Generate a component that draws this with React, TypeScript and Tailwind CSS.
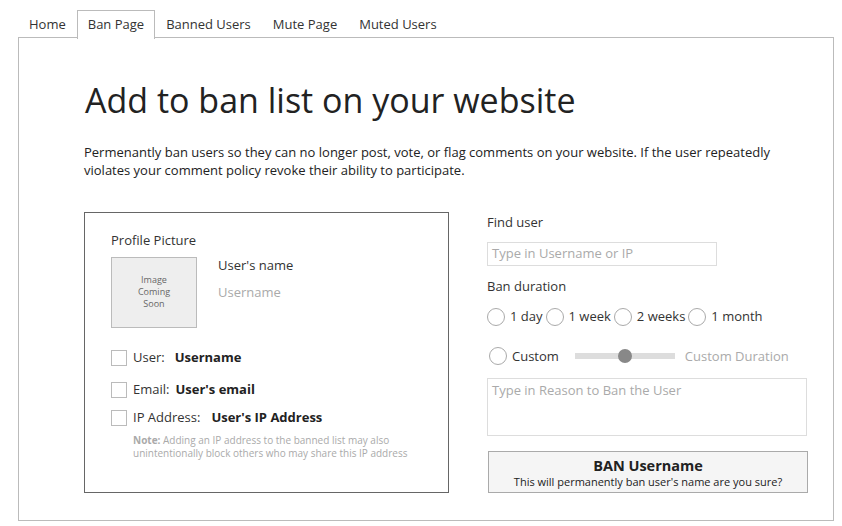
import React from 'react';

const tabs = ['Home', 'Ban Page', 'Banned Users', 'Mute Page', 'Muted Users'];

function Radio({ label, className = '' }: { label: string; className?: string }) {
  return (
    <label className={`flex items-center gap-[5px] ${className}`}>
      <span className="w-[18px] h-[18px] rounded-full border border-[#aaa] bg-white shrink-0" />
      <span>{label}</span>
    </label>
  );
}

function Check({ label, value, gap }: { label: string; value: string; gap: string }) {
  return (
    <div className="flex items-center h-[18px]">
      <span className="w-[16px] h-[16px] border border-[#bbb] bg-white shrink-0" />
      <span className="ml-[6px] text-[#333]">{label}</span>
      <span className={`${gap} font-bold text-[#222]`}>{value}</span>
    </div>
  );
}

export default function App() {
  return (
    <div
      className="w-[842px] h-[526px] bg-white text-[13px] text-[#333] pt-[10px] pl-[18px]"
      style={{ fontFamily: '"Open Sans", "Liberation Sans", sans-serif' }}
    >
      {/* Tabs */}
      <div className="flex h-[28px] w-[816px] border-b border-[#bbb]">
        {tabs.map((t) => (
          <div
            key={t}
            className={`px-[10px] flex items-center h-[29px] ${
              t === 'Ban Page'
                ? 'border border-b-0 border-[#bbb] bg-white -mb-px'
                : 'border border-transparent'
            }`}
          >
            {t}
          </div>
        ))}
      </div>

      {/* Panel */}
      <div className="w-[816px] h-[483px] border border-t-0 border-[#bbb] pl-[65px] pt-[39px]">
        <h1 className="ml-[1px] text-[34px] leading-[46px] text-[#222] font-normal">
          Add to ban list on your website
        </h1>
        <p className="mt-[20px] w-[700px] leading-[18px] text-[13px] text-[#222]">
          Permenantly ban users so they can no longer post, vote, or flag comments on your website. If the user repeatedly
          violates your comment policy revoke their ability to participate.
        </p>

        <div className="flex mt-[33px]">
          {/* Left card */}
          <div className="w-[365px] h-[281px] border border-[#666] pl-[26px] pt-[18px]">
            <div>Profile Picture</div>
            <div className="flex mt-[6px]">
              <div className="w-[86px] h-[71px] bg-[#eee] border border-[#bbb] flex items-center justify-center text-center text-[9px] leading-[12px] text-[#666]">
                Image
                <br />
                Coming
                <br />
                Soon
              </div>
              <div className="ml-[21px] -mt-[1px]">
                <div>User's name</div>
                <div className="mt-[8px] text-[#aaa]">Username</div>
              </div>
            </div>
            <div className="mt-[21px] flex flex-col gap-[14px]">
              <Check label="User:" value="Username" gap="ml-[10px]" />
              <Check label="Email:" value="User's email" gap="ml-[6px]" />
            </div>
            <div className="mt-[10px]">
              <Check label="IP Address:" value="User's IP Address" gap="ml-[11px]" />
            </div>
            <p className="ml-[22px] mt-[7px] text-[10px] leading-[13px] text-[#aaa]">
              <span className="font-bold">Note:</span> Adding an IP address to the banned list may also
              <br />
              unintentionally block others who may share this IP address
            </p>
          </div>

          {/* Right column */}
          <div className="ml-[38px] w-[320px] pt-[1px]">
            <div>Find user</div>
            <div className="mt-[9px] w-[230px] h-[24px] border border-[#ddd] px-[4px] flex items-center text-[#aaa]">
              Type in Username or IP
            </div>
            <div className="mt-[11px]">Ban duration</div>
            <div className="mt-[11px] flex items-center gap-[3px]">
              <Radio label="1 day" />
              <Radio label="1 week" />
              <Radio label="2 weeks" />
              <Radio label="1 month" />
            </div>
            <div className="mt-[20px] flex items-center pl-[2px]">
              <Radio label="Custom" />
              <div className="relative ml-[16px] w-[100px] h-[6px] bg-[#ddd]">
                <span className="absolute left-[43px] -top-[4px] w-[14px] h-[14px] rounded-full bg-[#888]" />
              </div>
              <span className="ml-[10px] text-[#aaa]">Custom Duration</span>
            </div>
            <div className="mt-[12px] w-[320px] h-[58px] border border-[#ddd] px-[4px] pt-[2px] text-[#aaa]">
              Type in Reason to Ban the User
            </div>
            <div className="mt-[15px] ml-[1px] w-[320px] h-[42px] bg-[#f5f5f5] border border-[#aaa] flex flex-col items-center justify-center">
              <div className="text-[14.5px] leading-[19px] font-bold text-[#222]">BAN Username</div>
              <div className="text-[11px] leading-[14px] text-[#222]">
                This will permanently ban user's name are you sure?
              </div>
            </div>
          </div>
        </div>
      </div>
    </div>
  );
}
